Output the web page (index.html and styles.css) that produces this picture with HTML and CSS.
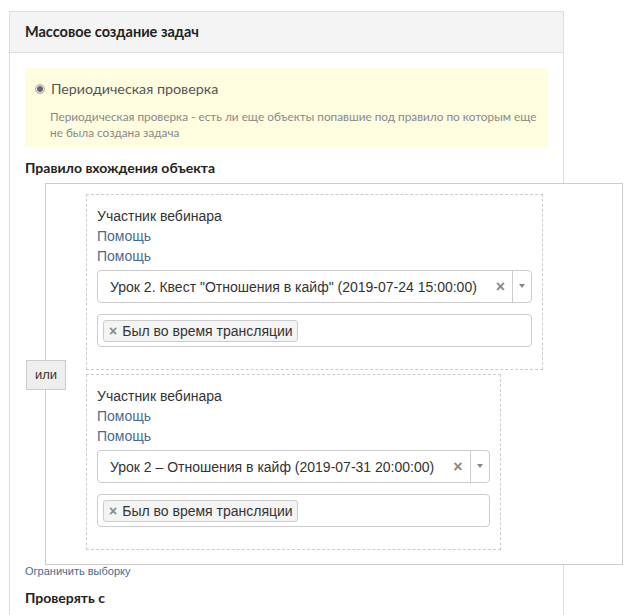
FILE: index.html
```html
<!DOCTYPE html>
<html>
	<head>
		<meta charset="utf-8">
		<title>Массовое создание задач</title>
		<link rel="stylesheet" href="styles.css">
	</head>
	<body>
		<div class="panel">
			<div class="panel-head">Массовое создание задач</div>
			<div class="panel-body">
				<div class="notice">
					<label class="radio">
						<span class="radio-dot"></span>
						Периодическая проверка
					</label>
					<p class="notice-text">Периодическая проверка - есть ли еще объекты попавшие под правило по которым еще не была создана задача</p>
				</div>

				<h4 class="title">Правило вхождения объекта</h4>

				<div class="rules">
					<div class="group">
						<div class="group-name">Участник вебинара</div>
						<a class="help" href="#">Помощь</a>
						<a class="help" href="#">Помощь</a>
						<div class="select">
							<span class="select-text">Урок 2. Квест "Отношения в кайф" (2019-07-24 15:00:00)</span>
							<span class="select-clear">×</span>
							<span class="select-arrow"></span>
						</div>
						<div class="multi">
							<span class="tag"><span class="tag-x">×</span>Был во время трансляции</span>
						</div>
					</div>

					<div class="or-row">
						<span class="or-btn">или</span>
					</div>

					<div class="group">
						<div class="group-name">Участник вебинара</div>
						<a class="help" href="#">Помощь</a>
						<a class="help" href="#">Помощь</a>
						<div class="select">
							<span class="select-text">Урок 2 – Отношения в кайф (2019-07-31 20:00:00)</span>
							<span class="select-clear">×</span>
							<span class="select-arrow"></span>
						</div>
						<div class="multi">
							<span class="tag"><span class="tag-x">×</span>Был во время трансляции</span>
						</div>
					</div>
				</div>

				<a class="limit" href="#">Ограничить выборку</a>

				<h4 class="title">Проверять с</h4>
			</div>
		</div>
	</body>
</html>
```

FILE: styles.css
```css
body, p, h4{
	margin: 0;
	padding: 0;
}
body{
	background: #fff;
	font-family: "Liberation Sans", Arial, sans-serif;
	color: #333;
	overflow: hidden;
}
a{
	text-decoration: none;
}
.panel{
	margin: 11px 0 0 9px;
	width: 553px;
	border: 1px solid #ddd;
}
.panel-head{
	height: 40px;
	padding: 0 15px;
	line-height: 40px;
	background: #f4f4f4;
	border-bottom: 1px solid #ddd;
	font-family: Lato, sans-serif;
	font-size: 14.5px;
	font-weight: bold;
	color: #222;
}
.panel-body{
	padding: 15px 15px 10px;
}
.notice{
	height: 79px;
	padding: 10px 0 0 10px;
	background: #fefde0;
	box-sizing: border-box;
}
.radio{
	display: flex;
	align-items: center;
	gap: 6px;
	font-family: Lato, sans-serif;
	font-size: 14.3px;
	line-height: 22px;
	color: #555;
}
.radio-dot{
	width: 10px;
	height: 10px;
	border: 1px solid #aaa;
	border-radius: 50%;
	background: radial-gradient(circle, #666 0, #666 2.5px, #e8e8e8 3.5px);
	box-sizing: border-box;
}
.notice-text{
	margin: 9px 0 0 15px;
	font-family: Lato, sans-serif;
	font-size: 11.8px;
	line-height: 16px;
	color: #888;
}
.title{
	margin-top: 11px;
	font-family: Lato, sans-serif;
	font-size: 14px;
	font-weight: bold;
	line-height: 20px;
	color: #222;
}
.rules{
	position: relative;
	width: 536px;
	margin: 5px 0 0 20px;
	padding: 10px 0 14px 40px;
	background: #fff;
	border: 1px solid #ccc;
}
.group{
	width: fit-content;
	padding: 11px 10px 22px;
	border: 1px dashed #ccc;
}
.group-name{
	font-size: 14px;
	line-height: 20px;
}
.help{
	display: block;
	font-size: 14px;
	line-height: 20px;
	color: #4a6b8f;
}
.select{
	display: flex;
	align-items: center;
	height: 31px;
	margin-top: 4px;
	border: 1px solid #ccc;
	border-radius: 4px;
	font-size: 14px;
}
.select-text{
	padding: 0 12px;
	white-space: nowrap;
}
.select-clear{
	padding: 0 7px;
	font-size: 16px;
	font-weight: bold;
	color: #888;
}
.select-arrow{
	align-self: stretch;
	width: 18px;
	border-left: 1px solid #ccc;
	position: relative;
}
.select-arrow::after{
	content: "";
	position: absolute;
	left: 6px;
	top: 13px;
	border-left: 3px solid transparent;
	border-right: 3px solid transparent;
	border-top: 4px solid #888;
}
.multi{
	display: flex;
	align-items: center;
	height: 31px;
	margin-top: 11px;
	padding: 0 5px;
	border: 1px solid #ccc;
	border-radius: 4px;
}
.tag{
	display: flex;
	align-items: center;
	height: 20px;
	padding: 0 4px 0 5px;
	border: 1px solid #ccc;
	border-radius: 3px;
	background: #f4f4f4;
	font-size: 14px;
}
.tag-x{
	margin-right: 5px;
	font-weight: bold;
	color: #888;
}
.or-row{
	position: relative;
	height: 4px;
}
.or-btn{
	position: absolute;
	left: -60px;
	top: -10px;
	width: 38px;
	height: 28px;
	line-height: 28px;
	text-align: center;
	background: #eee;
	border: 1px solid #ccc;
	font-size: 13px;
	color: #333;
}
.limit{
	display: block;
	font-size: 11px;
	line-height: 12px;
	color: #4a6b8f;
}
.limit + .title{
	margin-top: 11px;
}
```
